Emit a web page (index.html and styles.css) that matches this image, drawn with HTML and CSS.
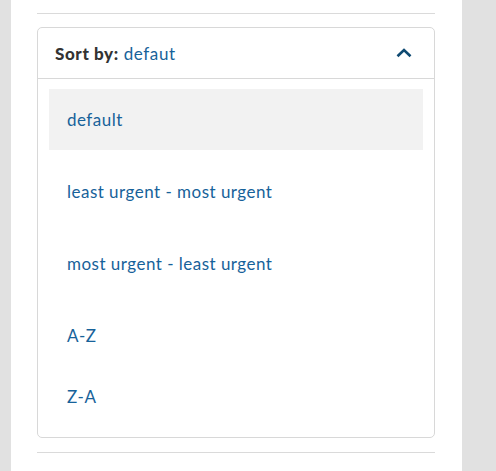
FILE: index.html
```html
<!DOCTYPE html>
<html>
<head>
<meta charset="utf-8">
<link rel="stylesheet" href="styles.css">
</head>
<body>
<div class="panel">
  <div class="content">
    <hr class="rule">
    <div class="dropdown">
      <div class="header">
        <span class="label"><b>Sort by:</b> <span class="value">defaut</span></span>
        <svg class="chev" width="16" height="10" viewBox="0 0 16 10"><path d="M1.5 8.2 L8 2 L14.5 8.2" fill="none" stroke="#0f4a72" stroke-width="2.6"/></svg>
      </div>
      <ul class="list">
        <li class="item active">default</li>
        <li class="item">least urgent - most urgent</li>
        <li class="item">most urgent - least urgent</li>
        <li class="item">A-Z</li>
        <li class="item">Z-A</li>
      </ul>
    </div>
    <hr class="rule bottom">
  </div>
</div>
</body>
</html>
```
FILE: styles.css
```css
html, body {
  margin: 0;
  padding: 0;
  background: #e1e1e1;
  height: 471px;
  overflow: hidden;
}
.panel {
  margin-left: 11px;
  width: 451px;
  height: 471px;
  background: #fff;
  padding-top: 13px;
  box-sizing: border-box;
}
.content {
  margin-left: 26px;
  width: 398px;
  font-family: Lato, "Noto Sans", sans-serif;
}
.rule {
  margin: 0;
  border: 0;
  height: 1px;
  background: #dadada;
}
.rule.bottom {
  margin-top: 14px;
}
.dropdown {
  margin-top: 13px;
  border: 1px solid #d8d8d8;
  border-radius: 5px;
  box-sizing: border-box;
}
.header {
  height: 50px;
  border-bottom: 1px solid #d8d8d8;
  display: flex;
  align-items: center;
  justify-content: space-between;
  padding: 0 22px 0 17px;
}
.label {
  font-size: 17px;
  color: #333;
  letter-spacing: 0.6px;
}
.label b {
  font-weight: 900;
}
.value {
  color: #17629a;
}
.chev {
  display: block;
}
.list {
  list-style: none;
  margin: 0;
  padding: 10px 11px;
}
.item {
  height: 61px;
  display: flex;
  align-items: center;
  padding-left: 18px;
  font-size: 17px;
  letter-spacing: 0.48px;
  color: #17629a;
  margin-bottom: 11px;
}
.item:nth-child(4), .item:last-child {
  margin-bottom: 0;
}
.item.active {
  background: #f2f2f2;
}
```
